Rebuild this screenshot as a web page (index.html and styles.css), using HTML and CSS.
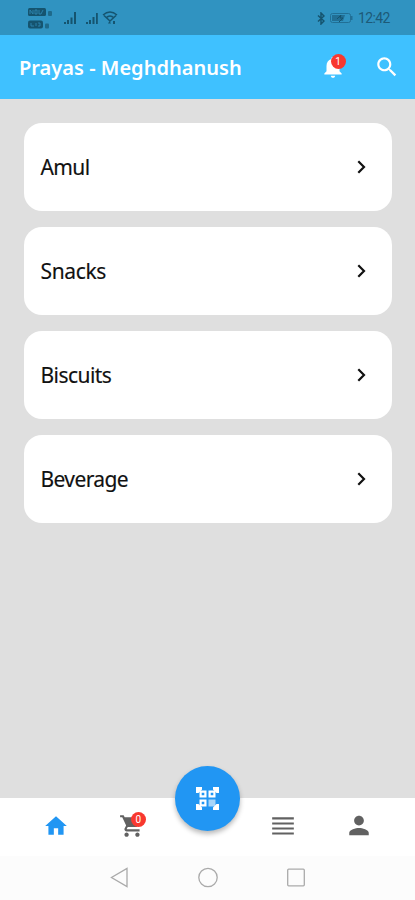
FILE: index.html
```html
<!DOCTYPE html>
<html lang="en">
<head>
<meta charset="utf-8">
<title>Prayas - Meghdhanush</title>
<link rel="stylesheet" href="styles.css">
</head>
<body>
<div class="screen">
  <div class="status">
    <svg class="signals" width="94" height="24" viewBox="0 0 94 24" fill="#15546f">
      <rect x="1" y="2" width="18" height="8" rx="1.5"/><rect x="1" y="14.500" width="15" height="8" rx="2"/>
      <g fill="none" stroke="#2d86b1" stroke-width=".9"><path d="M3 8V4l3 4V4M8 4h2v4H8zM12 4v4h2l2-4M4 17v3h3m2-3v3m2-3h2v3h-2"/></g>
      <rect x="21" y="5" width="4" height="5" rx="1" opacity=".65"/><rect x="18" y="17.500" width="4" height="5" rx="1" opacity=".65"/>
      <path d="M37 16h2v2h-2zM40 14h2v4h-2zM43.500 11.500h2v6.500h-2zM47 6h2v12h-2z"/>
      <path d="M59 16h2v2h-2zM62 14h2v4h-2zM65.500 11h2v7h-2zM69 7h1.800v11H69z"/>
      <g fill="none" stroke="#15546f" stroke-width="1.500"><path d="M76 9q7-6 14 0M79 12q4-4 8 0M77 9.500l6 5.500 6-5.500"/></g>
      <path d="m81 17.500 1.500-2.500 1.500 2.500zM86 15h2v3h-2z"/>
    </svg>
    <div class="status-end">
      <svg width="8" height="13" viewBox="0 0 8 13" fill="none" stroke="#15546f" stroke-width="1.500"><path d="m1 3.500 6 5.500-3 3V1l3 3-6 5.500"/></svg>
      <svg width="23" height="10" viewBox="0 0 23 10"><rect x=".5" y=".5" width="20" height="9" rx="2" fill="none" stroke="#216f95"/><path fill="#216f95" d="M2 2h13l-2 6H2zM21 3h1.500v4H21z"/><path d="m7 6 4-4-1 3h3l-4 4" fill="none" stroke="#15546f"/></svg>
      <span class="clock">12:42</span>
    </div>
  </div>
  <header class="appbar">
    <h1 class="title">Prayas - Meghdhanush</h1>
    <div class="icon bell">
      <svg viewBox="0 0 24 24"><path d="M12 22c1.100 0 2-.9 2-2h-4c0 1.100.89 2 2 2zm6-6v-5c0-3.070-1.640-5.640-4.500-6.320V4c0-.83-.67-1.500-1.500-1.500s-1.500.67-1.500 1.500v.68C7.630 5.360 6 7.920 6 11v5l-2 2v1h16v-1l-2-2z"/></svg>
      <span class="badge">1</span>
    </div>
    <div class="icon search">
      <svg viewBox="0 0 24 24"><path d="M15.500 14h-.79l-.28-.27C15.410 12.590 16 11.110 16 9.500 16 5.910 13.090 3 9.500 3S3 5.910 3 9.500 5.910 16 9.500 16c1.610 0 3.090-.59 4.230-1.570l.27.28v.79l5 4.990L20.490 19l-4.990-5zm-6 0C7.010 14 5 11.990 5 9.500S7.010 5 9.500 5 14 7.010 14 9.500 11.990 14 9.500 14z"/></svg>
    </div>
  </header>
  <main class="list">
    <div class="card"><span class="amul">Amul</span><svg class="chev" viewBox="0 0 9 14"><path d="m1.300 1.300 5.700 5.700-5.700 5.700"/></svg></div>
    <div class="card"><span class="snacks">Snacks</span><svg class="chev" viewBox="0 0 9 14"><path d="m1.300 1.300 5.700 5.700-5.700 5.700"/></svg></div>
    <div class="card"><span class="biscuits">Biscuits</span><svg class="chev" viewBox="0 0 9 14"><path d="m1.300 1.300 5.700 5.700-5.700 5.700"/></svg></div>
    <div class="card"><span class="beverage">Beverage</span><svg class="chev" viewBox="0 0 9 14"><path d="m1.300 1.300 5.700 5.700-5.700 5.700"/></svg></div>
  </main>
  <nav class="tabs">
    <div class="icon home"><svg viewBox="0 0 24 24"><path d="M10 20v-6h4v6h5v-8h3L12 3 2 12h3v8z"/></svg></div>
    <div class="icon cart">
      <svg viewBox="0 0 24 24"><path d="M7 18c-1.100 0-1.990.9-1.990 2S5.900 22 7 22s2-.9 2-2-.9-2-2-2zM1 2v2h2l3.600 7.590-1.350 2.450c-.16.28-.25.61-.25.960 0 1.100.9 2 2 2h12v-2H7.420c-.14 0-.25-.11-.25-.25l.03-.12.900-1.630h7.450c.75 0 1.410-.41 1.750-1.030l3.580-6.490c.08-.14.120-.31.120-.48 0-.55-.45-1-1-1H5.210l-.94-2H1zm16 16c-1.100 0-1.990.9-1.990 2s.89 2 1.990 2 2-.9 2-2-.9-2-2-2z"/></svg>
      <span class="badge">0</span>
    </div>
    <div class="slot"></div>
    <div class="icon"><svg viewBox="0 0 24 24"><path d="M2 4h20v1.900H2zM2 8.700h20v1.900H2zM2 13.300h20v1.900H2zM2 18h20v1.900H2z"/></svg></div>
    <div class="icon"><svg viewBox="0 0 24 24"><path d="M12 11.500c2.500 0 4.500-2 4.500-4.500S14.500 2.500 12 2.500 7.500 4.500 7.500 7s2 4.500 4.500 4.500zm0 2.300c-3 0-9 1.500-9 4.500v2.200h18v-2.200c0-3-6-4.500-9-4.500z"/></svg></div>
    <div class="fab">
      <svg width="25" height="25" viewBox="0 0 25 25" fill="#fff">
        <path d="M1 1h6v2.500L3.500 7H1zM18 1h6v6h-2.500L18 3.500zM1 18h2.500L7 21.500V24H1zM21.500 18H24v6h-6v-2.500z"/>
        <path fill-rule="evenodd" d="M4.500 4.500h7v7h-7zM6.700 6.700v2.600h2.600V6.700zM13.500 4.500h7v7h-7zM15.700 6.700v2.600h2.600V6.700zM4.500 13.500h7v7h-7zM6.700 15.700v2.600h2.600v-2.600z"/>
        <path opacity=".6" d="M13.500 13.500h7v7h-7z"/>
      </svg>
    </div>
  </nav>
  <div class="system">
    <svg width="20" height="22" viewBox="0 0 20 22"><path d="M17 1.500v18L1.500 10.500z"/></svg>
    <svg width="22" height="22" viewBox="0 0 22 22"><circle cx="11" cy="10.500" r="9.200"/></svg>
    <svg width="20" height="20" viewBox="0 0 20 20"><rect x="1.700" y="1.200" width="16.600" height="16.600" rx="1"/></svg>
  </div>
</div>
</body>
</html>
```
FILE: styles.css
```css
* { box-sizing: border-box; }
body { margin: 0; font-family: "Noto Sans", "Open Sans", sans-serif; }
svg { display: block; flex: none; }
.screen { width: 415px; height: 900px; display: flex; flex-direction: column; background: #dfdfdf; overflow: hidden; }
.status { height: 35px; background: #3093c1; display: flex; justify-content: space-between; padding: 6px 25px 0 27px; }
.status-end { display: flex; align-items: center; gap: 5px; height: 24px; }
.clock { font: 14px/24px Roboto, sans-serif; color: #1d5a78; width: 32px; letter-spacing: -.6px; white-space: nowrap; }
.appbar { height: 64px; background: #3fc1ff; display: flex; align-items: center; padding: 0 15px 0 19px; }
.title { margin: 2px auto 0 0; font: 600 20px/28px "Noto Sans", sans-serif; color: #fff; white-space: nowrap; letter-spacing: .02px; }
.icon { position: relative; width: 26px; height: 26px; flex: none; fill: #616161; }
.icon svg { width: 26px; height: 26px; }
.appbar .icon { fill: #fff; }
.bell { margin-right: 28.500px; }
.badge { position: absolute; left: 11px; top: 0; width: 15px; height: 15px; border-radius: 50%; background: #f8382f; color: #fff; font: 10px/15px Roboto, sans-serif; text-align: center; }
.list { flex: 1; padding: 23.500px 23px 0 23.500px; display: flex; flex-direction: column; gap: 15.500px; }
.card { height: 88.500px; flex: none; background: #fff; border-radius: 18px; display: flex; align-items: center; justify-content: space-between; padding: 0 26px 0 17px; font-size: 21px; line-height: 28px; color: #111; -webkit-text-stroke: .15px #111; }
.amul { letter-spacing: -.6px; }
.snacks { letter-spacing: -.35px; }
.biscuits { letter-spacing: -.55px; }
.beverage { letter-spacing: -.6px; }
.chev { width: 9px; height: 14px; fill: none; stroke: #111; stroke-width: 2.200; }
.tabs { position: relative; height: 58px; background: #fff; display: flex; justify-content: space-around; align-items: center; padding: 0 18px 2px; }
.home { fill: #2196f3; }
.cart { background: linear-gradient(#616161, #616161) 7px 6px / 10px 7px no-repeat; }
.cart .badge { left: 12px; top: -1px; }
.slot { width: 26px; }
.fab { position: absolute; left: 175px; top: -32px; width: 65px; height: 65px; border-radius: 50%; background: #2196f3; box-shadow: 0 3px 5px rgba(0,0,0,.28); display: flex; align-items: center; justify-content: center; }
.system { height: 44px; background: #fcfcfc; display: flex; justify-content: center; align-items: center; gap: 67px; fill: none; stroke: #aaa; stroke-width: 1.300; }
```
